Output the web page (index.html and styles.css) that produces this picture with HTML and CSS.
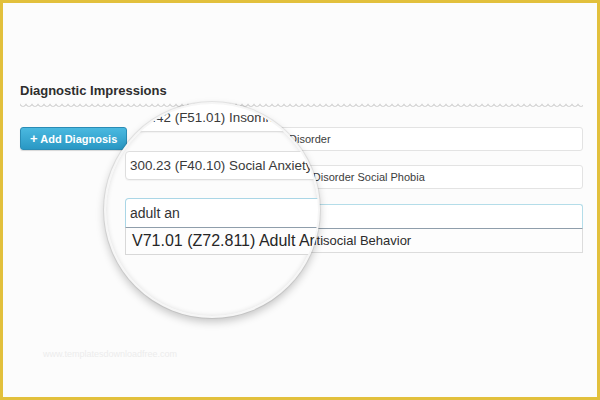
FILE: index.html
```html
<!DOCTYPE html>
<html lang="en">

<head>
    <meta charset="UTF-8">
    <meta name="viewport" content="width=device-width, initial-scale=1.0">
    <title>Diagnostic Impressions</title>
    <link rel="stylesheet" href="styles.css">
</head>

<body>
    <div class="frame">
        <h2 class="title">Diagnostic Impressions</h2>
        <div class="wave"></div>

        <div class="section">
            <button class="add-btn"><span class="plus">+</span> Add Diagnosis</button>
            <div class="list">
                <div class="dx-row">307.42 (F51.01) Insomnia Disorder</div>
                <div class="dx-row">300.23 (F40.10) Social Anxiety Disorder Social Phobia</div>
                <div class="search">
                    <div class="search-input">adult an</div>
                    <div class="suggest">V71.01 (Z72.811) Adult Antisocial Behavior</div>
                </div>
            </div>
        </div>

        <p class="credit">www.templatesdownloadfree.com</p>

        <!-- magnifier over the list -->
        <div class="lens">
            <div class="lens-view">
                <div class="lens-row">307.42 (F51.01) Insomnia Disorder</div>
                <div class="lens-row">300.23 (F40.10) Social Anxiety Disorder Social Phobia</div>
                <div class="lens-input">adult an</div>
                <div class="lens-suggest">V71.01 (Z72.811) Adult Antisocial Behavior</div>
            </div>
        </div>
    </div>
</body>

</html>
```

FILE: styles.css
```css
* {
    box-sizing: border-box;
}

body {
    margin: 0;
    padding: 0;
    font-family: "Liberation Sans", Arial, sans-serif;
    background-color: #fcfcfc;
}

.frame {
    position: relative;
    width: 600px;
    height: 400px;
    border: 3px solid #e2c03c;
    background-color: #fcfcfc;
    padding: 0 14px 0 17px;
    overflow: hidden;
}

.title {
    margin: 0;
    padding-top: 80px;
    font-size: 13px;
    line-height: 16px;
    font-weight: bold;
    color: #2e2e2e;
}

.wave {
    margin-top: 4px;
    height: 4px;
    background: radial-gradient(circle at 3px 0, transparent 2.5px, #dadada 2.8px, #dadada 3.6px, transparent 4.2px) 0 0 / 6px 4px repeat-x;
}

.section {
    display: flex;
    align-items: flex-start;
    gap: 27px;
    margin-top: 20px;
}

.add-btn {
    width: 107px;
    height: 23px;
    padding: 0 0 0 9px;
    text-align: left;
    font-family: "Liberation Sans", Arial, sans-serif;
    font-size: 11px;
    font-weight: bold;
    color: white;
    border: 1px solid #2a8cb5;
    border-radius: 3px;
    background: linear-gradient(#4ab9e0, #2a98c4);
    box-shadow: 0 1px 1px rgba(0, 0, 0, 0.15);
}

.plus {
    font-size: 13px;
}

.list {
    flex: 1;
    display: flex;
    flex-direction: column;
}

.dx-row {
    height: 24px;
    padding: 0 5px;
    font-size: 11px;
    line-height: 22px;
    color: #3c3c3c;
    white-space: nowrap;
    border: 1px solid #e3e3e3;
    border-radius: 3px;
    background-color: #fff;
    margin-bottom: 14px;
}

.dx-row + .dx-row {
    margin-bottom: 15px;
}

.search-input {
    height: 24px;
    padding: 0 5px;
    font-size: 11px;
    line-height: 23px;
    color: #333;
    border: 1px solid #b4dde9;
    border-bottom: none;
    border-radius: 3px 3px 0 0;
    background-color: #fff;
}

.suggest {
    height: 25px;
    padding-left: 10px;
    font-size: 13px;
    line-height: 23px;
    color: #2c2c2c;
    white-space: nowrap;
    border: 1px solid #dcdcdc;
    border-top-color: #8f9eab;
    background-color: #fdfdfd;
}

.credit {
    margin: 96px 0 0 23px;
    font-size: 9px;
    color: #ececec;
}

/* magnifier */
.lens {
    position: absolute;
    left: 101px;
    top: 99px;
    width: 216px;
    height: 216px;
    border-radius: 50%;
    overflow: hidden;
    background-color: #fcfcfc;
    border: 2px solid #f6f6f6;
    box-shadow: 0 0 0 1px rgba(0, 0, 0, 0.07), 0 4px 8px rgba(0, 0, 0, 0.22), inset 0 0 5px rgba(0, 0, 0, 0.12);
}

.lens-view {
    position: absolute;
    left: 19px;
    top: -1px;
    width: 420px;
}

.lens-row {
    height: 29px;
    padding: 0 4px;
    font-size: 13.4px;
    line-height: 27px;
    color: #3a3a3a;
    white-space: nowrap;
    border: 1px solid #dedede;
    border-radius: 4px;
    background-color: #fff;
    box-shadow: 0 1px 1px rgba(0, 0, 0, 0.04);
    margin-bottom: 19px;
}

.lens-row + .lens-row {
    margin-bottom: 18px;
}

.lens-input {
    height: 29px;
    padding: 0 4px;
    font-size: 14px;
    line-height: 28px;
    color: #333;
    border: 1px solid #aad6e6;
    border-bottom: none;
    border-radius: 4px 4px 0 0;
    background-color: #fff;
}

.lens-suggest {
    height: 28px;
    padding-left: 6px;
    font-size: 16px;
    line-height: 26px;
    color: #262626;
    white-space: nowrap;
    border: 1px solid #d8d8d8;
    border-top-color: #8f9eab;
    background-color: #fdfdfd;
}
```
